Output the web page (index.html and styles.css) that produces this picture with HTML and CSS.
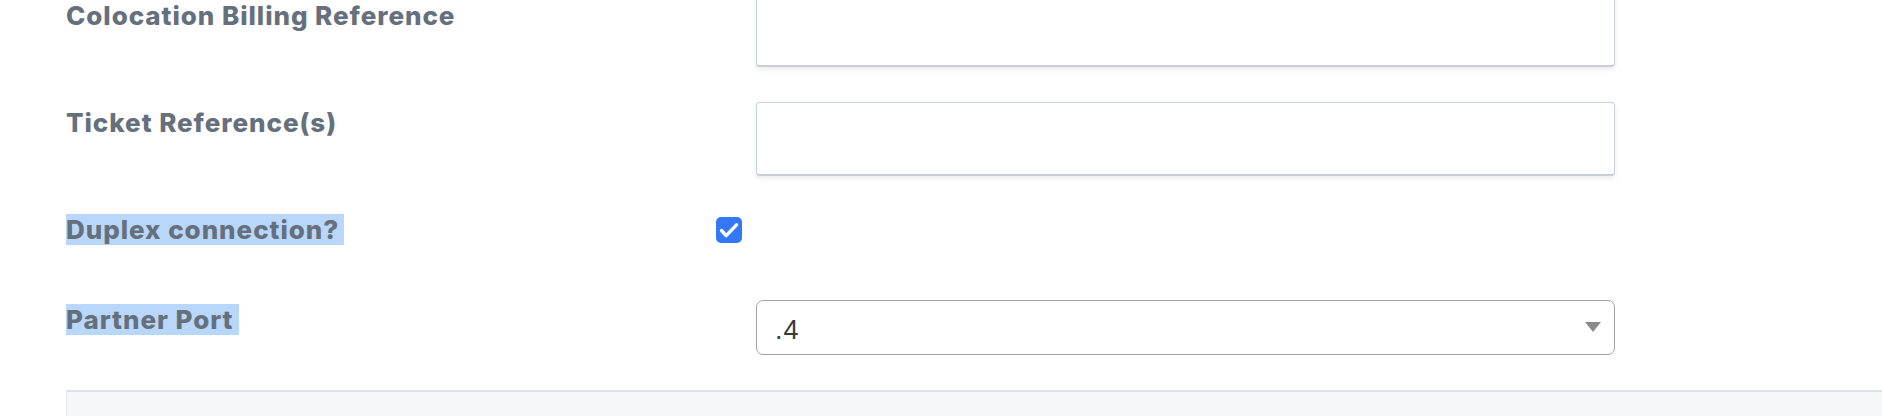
FILE: index.html
```html
<!DOCTYPE html>
<html lang="en">
<head>
<meta charset="utf-8">
<title>Form</title>
<link rel="stylesheet" href="styles.css">
</head>
<body>
<div class="form">
  <div class="row row-first">
    <div class="label label-pad">Colocation Billing Reference</div>
    <div class="control"><div class="input"></div></div>
  </div>
  <div class="row row-second">
    <div class="label">Ticket Reference(s)</div>
    <div class="control"><div class="input"></div></div>
  </div>
  <div class="row row-check">
    <div class="label"><span class="sel">Duplex connection? </span></div>
    <div class="control">
      <span class="checkbox">
        <svg width="26" height="26" viewBox="0 0 26 26"><path d="M5.5 13.5 L10.2 18.6 L20.5 7.8" fill="none" stroke="#fff" stroke-width="3.4" stroke-linecap="round" stroke-linejoin="round"/></svg>
      </span>
    </div>
  </div>
  <div class="row row-select">
    <div class="label"><span class="sel">Partner Port </span></div>
    <div class="control">
      <div class="select"><span class="select-value">.4</span><span class="arrow"></span></div>
    </div>
  </div>
  <div class="panel"></div>
</div>
</body>
</html>
```

FILE: styles.css
```css
html, body {
  margin: 0;
  padding: 0;
  background: #ffffff;
  overflow: hidden;
}
body {
  width: 1882px;
  height: 416px;
}
.form {
  padding-left: 66px;
  margin-top: -7px;
}
.row {
  display: flex;
  align-items: flex-start;
}
.label {
  width: 690px;
  flex: none;
  font-family: Inter, "Noto Sans", sans-serif;
  font-weight: 800;
  font-size: 26px;
  line-height: 42px;
  color: #66707c;
  letter-spacing: 0.95px;
}
.label-pad {
  padding-top: 2px;
}
.control {
  width: 859px;
  flex: none;
}
.row-second {
  margin-top: 35px;
}
.row-check {
  margin-top: 33px;
  align-items: center;
}
.row-select {
  margin-top: 48px;
}
.input {
  box-sizing: border-box;
  height: 74px;
  background: #fff;
  border: 1px solid #cdd3da;
  border-bottom: 2px solid #c8ced6;
  border-radius: 4px;
  box-shadow: 0 2px 5px rgba(40, 50, 70, 0.1);
}
.sel {
  background: #b9d6fb;
  padding-right: 5px;
}
.checkbox {
  display: block;
  width: 26px;
  height: 26px;
  margin-left: -40px;
  border-radius: 5px;
  background: #3478f6;
}
.checkbox svg {
  display: block;
}
.select {
  box-sizing: border-box;
  margin-top: 1px;
  height: 55px;
  border: 1.5px solid #a3a3a3;
  border-radius: 7px;
  background: #fff;
  display: flex;
  align-items: center;
  justify-content: space-between;
  padding: 0 13px 0 18px;
}
.select-value {
  font-family: "Liberation Sans", Arial, sans-serif;
  font-size: 27px;
  color: #3a3a3a;
  padding-top: 6px;
  letter-spacing: 1px;
}
.arrow {
  width: 0;
  height: 0;
  border-left: 8px solid transparent;
  border-right: 8px solid transparent;
  border-top: 10px solid #8a8a8a;
  margin-top: -2px;
}
.panel {
  margin-top: 35px;
  height: 60px;
  margin-right: -40px;
  background: #f6f7f9;
  border-top: 2px solid #dde1e6;
  border-left: 1px solid #e2e5e9;
}
```
